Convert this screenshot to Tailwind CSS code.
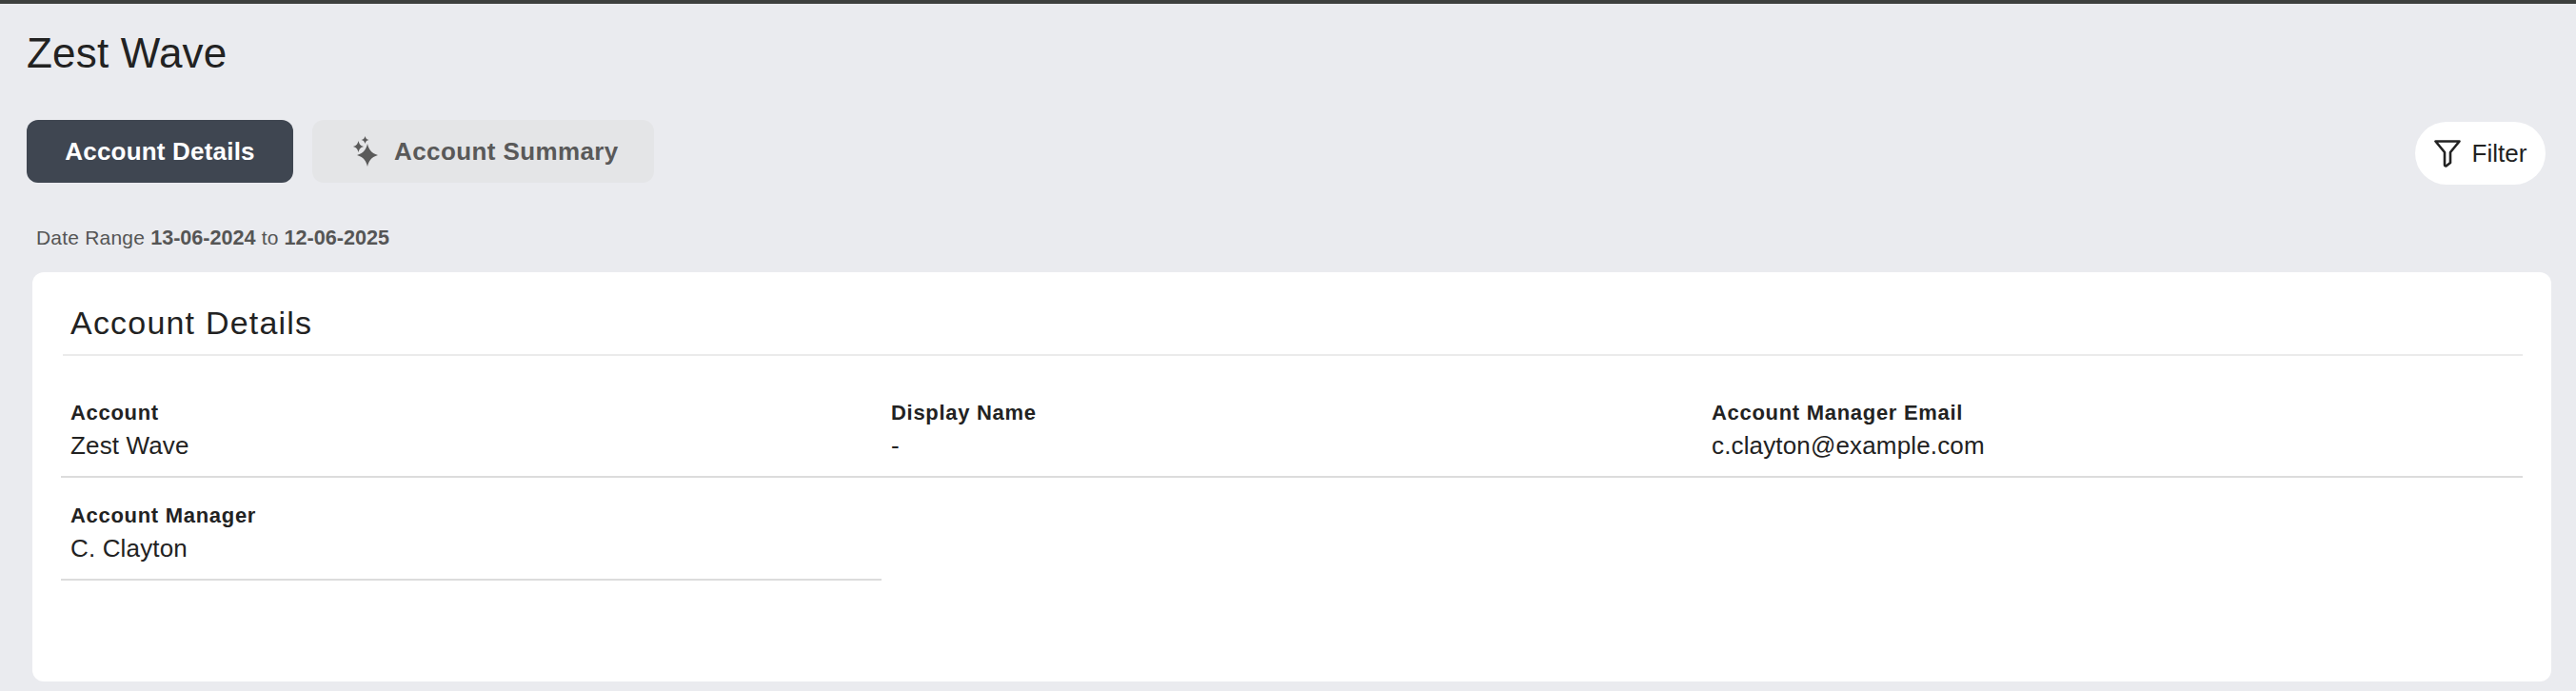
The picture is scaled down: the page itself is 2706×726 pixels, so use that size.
<!DOCTYPE html>
<html>
<head>
<meta charset="utf-8">
<script src="https://cdn.jsdelivr.net/npm/@tailwindcss/browser@4"></script>
</head>
<body class="m-0 bg-[#eaebef] font-['Liberation_Sans',Arial,sans-serif] text-[#222222] h-[726px] overflow-hidden">
<div class="h-[4px] bg-[#3d403e]"></div>
<div class="pl-[28px] pr-[32px]">
  <h1 class="mt-[23px] h-[58px] leading-[58px] text-[44px] font-normal tracking-[0.2px] text-[#222222]">Zest Wave</h1>
  <div class="mt-[41px] flex items-start justify-between">
    <div class="flex gap-[20px]">
      <div class="h-[66px] w-[280px] rounded-[12px] bg-[#3f4651] flex items-center justify-center text-[26px] font-bold text-white tracking-[0.2px]">Account Details</div>
      <div class="h-[66px] w-[359px] rounded-[12px] bg-[#e4e5e7] flex items-center pl-[43px] gap-[17px] text-[26px] font-bold text-[#595959] tracking-[0.4px]">
        <svg class="shrink-0" width="26" height="32" viewBox="0 0 26 32" fill="#5a5a5a"><path d="M15 8 C16.500 14 18.500 17.500 26 20 C18.500 22.500 16.500 26 15 32 C13.500 26 11.500 22.500 4 20 C11.500 17.500 13.500 14 15 8Z"/><path d="M5.500 5 C6.500 8.500 7.500 10 11 11 C7.500 12 6.500 13.500 5.500 17 C4.500 13.500 3.500 12 0 11 C3.500 10 4.500 8.500 5.500 5Z"/><path d="M12.500 0 C13.200 2.500 14 3.300 16.500 4 C14 4.700 13.200 5.500 12.500 8 C11.800 5.500 11 4.700 8.500 4 C11 3.300 11.800 2.500 12.500 0Z"/></svg>
        <span>Account Summary</span>
      </div>
    </div>
    <div class="mt-[2px] h-[66px] w-[137px] rounded-full bg-white flex items-center justify-center gap-[12px] text-[26px] text-[#222222]">
      <svg class="shrink-0" width="28" height="29" viewBox="0 0 28 29" fill="none" stroke="#222222" stroke-width="2.600" stroke-linejoin="round"><path d="M1.500 1.500 H26.500 L17 13 V24 L12.500 27.500 C11.500 27.500 11 27 11 26 V13 Z"/></svg>
      <span>Filter</span>
    </div>
  </div>
  <p class="mt-[42px] ml-[10px] h-[28px] leading-[28px] text-[21px] tracking-[0.2px] text-[#555555]">Date Range <b class="font-bold text-[21.6px] tracking-normal">13-06-2024</b> to <b class="font-bold text-[21.6px] tracking-normal">12-06-2025</b></p>
</div>
<section class="mt-[22px] ml-[34px] mr-[26px] h-[430px] rounded-[12px] bg-white px-[30px]">
  <div class="h-[88px] ml-[2px] border-b-2 border-[#ebebeb] pl-[8px] pt-[33px]">
    <h2 class="text-[34px] leading-[40px] font-normal tracking-[1.200px] text-[#222222]">Account Details</h2>
  </div>
  <div class="grid grid-cols-3 mt-[20px]">
    <div class="h-[108px] border-b-2 border-[#dcdcdc] pl-[10px] pt-[26px]"><div class="text-[22px] leading-[28px] font-bold tracking-[0.7px]">Account</div><div class="mt-[3px] text-[26px] leading-[34px] tracking-[0.15px]">Zest Wave</div></div>
    <div class="h-[108px] border-b-2 border-[#dcdcdc] pl-[10px] pt-[26px]"><div class="text-[22px] leading-[28px] font-bold tracking-[0.7px]">Display Name</div><div class="mt-[3px] text-[26px] leading-[34px] tracking-[0.15px]">-</div></div>
    <div class="h-[108px] border-b-2 border-[#dcdcdc] pl-[10px] pt-[26px]"><div class="text-[22px] leading-[28px] font-bold tracking-[0.7px]">Account Manager Email</div><div class="mt-[3px] text-[26px] leading-[34px] tracking-[0.15px]">c.clayton@example.com</div></div>
    <div class="h-[108px] border-b-2 border-[#dcdcdc] pl-[10px] pt-[26px]"><div class="text-[22px] leading-[28px] font-bold tracking-[0.7px]">Account Manager</div><div class="mt-[3px] text-[26px] leading-[34px] tracking-[0.15px]">C. Clayton</div></div>
  </div>
</section>
</body>
</html>
